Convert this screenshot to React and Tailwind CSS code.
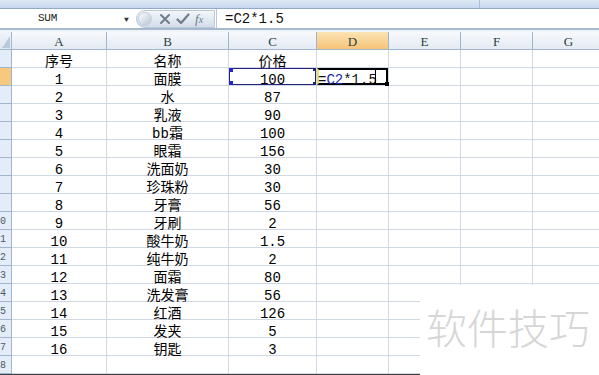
import React from 'react';

const rows = [
    ['序号', '名称', '价格'],
    ['1', '面膜', '100'],
    ['2', '水', '87'],
    ['3', '乳液', '90'],
    ['4', 'bb霜', '100'],
    ['5', '眼霜', '156'],
    ['6', '洗面奶', '30'],
    ['7', '珍珠粉', '30'],
    ['8', '牙膏', '56'],
    ['9', '牙刷', '2'],
    ['10', '酸牛奶', '1.5'],
    ['11', '纯牛奶', '2'],
    ['12', '面霜', '80'],
    ['13', '洗发膏', '56'],
    ['14', '红酒', '126'],
    ['15', '发夹', '5'],
    ['16', '钥匙', '3'],
    ['', '', ''],
];

const cols = ['A', 'B', 'C', 'D', 'E', 'F', 'G'];
const cell = 'h-[18px] pt-[8px] border-r border-b border-[#d0d7e5] flex items-center justify-center whitespace-nowrap';

function ColHeader({ label }) {
    const active = label === 'D';
    return (
        <div className={`h-[18px] pt-[2px] border-r border-b border-[#9eb6ce] flex items-center justify-center font-['Liberation_Serif',serif] text-[13px] text-[#27413e] ${active ? 'bg-gradient-to-b from-[#fbe3b4] to-[#f6c477]' : 'bg-gradient-to-b from-[#f7f9fc] to-[#e4eaf3]'}`}>
            {label}
        </div>
    );
}

function RowHeader({ n }) {
    const active = n === 2;
    return (
        <div className={`h-[18px] pt-[3px] border-r border-b border-[#9eb6ce] flex items-center ${active ? 'bg-[#f7c97f]' : 'bg-[#e4ecf7]'}`}>
            {n >= 10 && (
                <span className="text-[10px] leading-none text-[#4a5a6a] font-['Liberation_Mono',monospace]">{n % 10}</span>
            )}
        </div>
    );
}

export default function App() {
    return (
        <div className="w-[599px] h-[375px] overflow-hidden relative bg-white flex flex-col font-['Liberation_Mono','Noto_Sans_CJK_SC',monospace] text-black">
            {/* ribbon edge */}
            <div className="h-[9px] bg-gradient-to-b from-[#dfe9f5] to-[#c6d8ee] border-b border-[#8ea9ca] flex">
                <div className="w-[480px] border-r border-[#a9bfdb]" />
            </div>

            {/* formula bar */}
            <div className="h-[21px] flex items-center bg-white border-b-2 border-[#a7b8ce]">
                <div className="w-[136px] h-full flex items-center relative">
                    <span className="ml-[38px] text-[11px] text-[#222] tracking-tight">SUM</span>
                    <span className="absolute left-[124px] top-[5px] text-[8px] text-[#333]">▼</span>
                </div>
                <div className="w-[79px] h-[18px] rounded-l-full bg-gradient-to-b from-[#f3f6fa] to-[#d3dde9] border border-[#b9c7d8] flex items-center">
                    <div className="w-[14px] h-[14px] ml-[1px] rounded-full bg-gradient-to-br from-[#ffffff] to-[#b7c4d4] border border-[#c3cfdd]" />
                    <svg width="12" height="12" viewBox="0 0 12 12" className="ml-[7px]">
                        <path d="M2 2 L10 10 M10 2 L2 10" stroke="#6f7c8c" strokeWidth="2" strokeLinecap="round" />
                    </svg>
                    <svg width="14" height="12" viewBox="0 0 14 12" className="ml-[5px]">
                        <path d="M1.5 6.5 L5 10 L12.5 1.5" stroke="#6f7c8c" strokeWidth="2.2" fill="none" strokeLinecap="round" strokeLinejoin="round" />
                    </svg>
                    <span className="ml-[5px] font-['Liberation_Serif',serif] italic text-[13px] text-[#6f7c8c] leading-none">f<span className="text-[10px]">x</span></span>
                </div>
                <div className="h-full pt-[1px] border-l border-[#b9c7d8] ml-[1px] pl-[8px] flex items-center text-[14px] text-[#111]">
                    =C2*1.5
                </div>
            </div>

            <div className="h-[2px] bg-[#f0f3f8]" />

            {/* sheet */}
            <div className="grid grid-cols-[12px_95px_122px_88px_72px_72px_72px_72px] text-[14px]">
                <div className="h-[18px] border-r border-b border-[#9eb6ce] bg-gradient-to-b from-[#f0f4f9] to-[#dfe7f1] relative overflow-hidden">
                    <svg width="12" height="18" viewBox="0 0 12 18" className="absolute inset-0">
                        <path d="M10 4 L10 16 L2 16 Z" fill="#b9c9dc" />
                    </svg>
                </div>
                {cols.map(c => <ColHeader key={c} label={c} />)}

                {rows.map((r, i) => {
                    const n = i + 1;
                    return (
                        <React.Fragment key={n}>
                            <RowHeader n={n} />
                            <div className={cell}>{r[0]}</div>
                            <div className={cell}>{r[1]}</div>
                            <div className={`${cell} relative`}>
                                {r[2]}
                                {n === 2 && (
                                    <>
                                        <div className="absolute inset-0 border border-[#22237a]" />
                                        <div className="absolute left-0 top-0 w-[4px] h-[4px] bg-[#2326c8]" />
                                        <div className="absolute left-0 bottom-0 w-[4px] h-[4px] bg-[#2326c8]" />
                                        <div className="absolute right-0 top-0 w-[3px] h-[3px] bg-[#22237a]" />
                                        <div className="absolute right-0 bottom-0 w-[3px] h-[3px] bg-[#22237a]" />
                                    </>
                                )}
                            </div>
                            <div className={`${cell} relative justify-start`}>
                                {n === 2 && (
                                    <>
                                        <div className="absolute inset-0 border-2 border-black border-l-[#e8df6a]" />
                                        <span className="relative ml-[1px] text-[14px] text-[#111]">=<span className="text-[#1c2bb0]">C2</span>*1.5</span>
                                        <div className="absolute left-[58px] top-[2px] w-[1px] h-[13px] bg-black" />
                                        <div className="absolute right-[-1px] bottom-[-1px] w-[4px] h-[4px] bg-black" />
                                    </>
                                )}
                            </div>
                            <div className={cell} />
                            <div className={cell} />
                            <div className={cell} />
                        </React.Fragment>
                    );
                })}
            </div>

            <div className="flex-1 bg-[#3e3e3e]" />

            {/* watermark overlay */}
            <div className="absolute left-[420px] top-[285px] right-0 bottom-0 bg-white flex items-start">
                <span className="mt-[21px] ml-[6px] font-['Noto_Sans_CJK_SC',sans-serif] text-[41px] leading-none font-light text-[#d6d6d6]">软件技巧</span>
            </div>
        </div>
    );
}
